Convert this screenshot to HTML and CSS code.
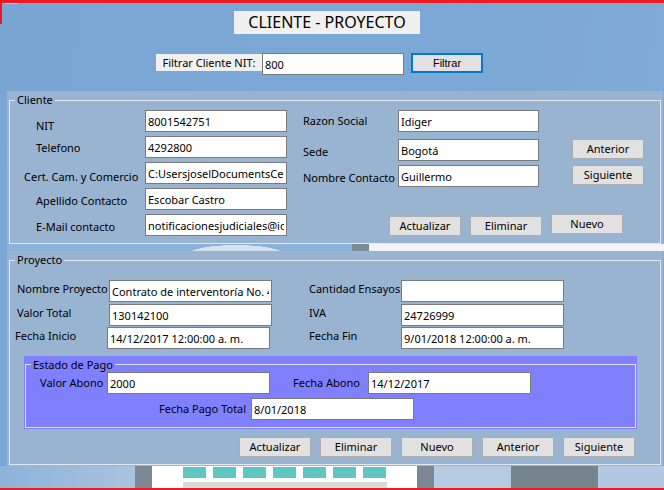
FILE: index.html
```html
<!DOCTYPE html>
<html lang="es">
<head>
<meta charset="utf-8">
<title>Cliente - Proyecto</title>
<link rel="stylesheet" href="styles.css">
</head>
<body>
<div class="screen">
  <header class="head">
    <h1 class="title">CLIENTE - PROYECTO</h1>
    <div class="filter">
      <label class="filter-label">Filtrar Cliente NIT:</label>
      <input class="tb filter-input" type="text" value="800" readonly>
      <button class="btn btn-primary" type="button">Filtrar</button>
    </div>
  </header>

  <section class="panel panel-cliente">
    <fieldset class="group">
      <legend class="legend">Cliente</legend>
      <div class="cli-body">
        <div class="cli-left">
          <label class="lbl lbl-nit">NIT</label>
          <input class="tb" type="text" value="8001542751" readonly>
          <label class="lbl lbl-tel">Telefono</label>
          <input class="tb" type="text" value="4292800" readonly>
          <label class="lbl lbl-cert">Cert. Cam. y Comercio</label>
          <input class="tb" type="text" value="C:UsersjoselDocumentsCertificados" readonly>
          <label class="lbl lbl-ape">Apellido Contacto</label>
          <input class="tb" type="text" value="Escobar Castro" readonly>
          <label class="lbl lbl-mail">E-Mail contacto</label>
          <input class="tb" type="text" value="notificacionesjudiciales@idiger.gov.co" readonly>
        </div>
        <div class="cli-right">
          <div class="rrow">
            <label class="lbl lbl-razon">Razon Social</label>
            <input class="tb tb-r" type="text" value="Idiger" readonly>
          </div>
          <div class="rrow rrow-2">
            <label class="lbl lbl-sede">Sede</label>
            <input class="tb tb-r" type="text" value="Bogotá" readonly>
            <button class="btn btn-nav" type="button">Anterior</button>
          </div>
          <div class="rrow rrow-3">
            <label class="lbl lbl-sede">Nombre Contacto</label>
            <input class="tb tb-r" type="text" value="Guillermo" readonly>
            <button class="btn btn-nav" type="button">Siguiente</button>
          </div>
          <div class="actions actions-cli">
            <button class="btn" type="button">Actualizar</button>
            <button class="btn" type="button">Eliminar</button>
            <button class="btn btn-up" type="button">Nuevo</button>
          </div>
        </div>
      </div>
    </fieldset>
  </section>

  <div class="scenery scenery-mid"></div>

  <section class="panel panel-proyecto">
    <fieldset class="group">
      <legend class="legend">Proyecto</legend>
      <div class="pro-body">
        <div class="prow">
          <div class="pair">
            <label class="lbl plbl">Nombre Proyecto</label>
            <input class="tb tb-p" type="text" value="Contrato de interventoría No. 417 de 2017" readonly>
          </div>
          <div class="pair pair-r">
            <label class="lbl plbl plbl-r">Cantidad Ensayos</label>
            <input class="tb tb-p" type="text" value="" readonly>
          </div>
        </div>
        <div class="prow prow-2">
          <div class="pair">
            <label class="lbl plbl">Valor Total</label>
            <input class="tb tb-p" type="text" value="130142100" readonly>
          </div>
          <div class="pair pair-r">
            <label class="lbl plbl plbl-r">IVA</label>
            <input class="tb tb-p" type="text" value="24726999" readonly>
          </div>
        </div>
        <div class="prow prow-3">
          <div class="pair pair-shift">
            <label class="lbl plbl">Fecha Inicio</label>
            <input class="tb tb-p" type="text" value="14/12/2017 12:00:00 a. m." readonly>
          </div>
          <div class="pair pair-r">
            <label class="lbl plbl plbl-r">Fecha Fin</label>
            <input class="tb tb-p" type="text" value="9/01/2018 12:00:00 a. m." readonly>
          </div>
        </div>

        <div class="pago">
          <fieldset class="group group-pago">
            <legend class="legend">Estado de Pago</legend>
            <div class="pago-row">
              <label class="lbl lbl-abono">Valor Abono</label>
              <input class="tb tb-p" type="text" value="2000" readonly>
              <label class="lbl lbl-fabono">Fecha Abono</label>
              <input class="tb tb-p" type="text" value="14/12/2017" readonly>
            </div>
            <div class="pago-row pago-row-2">
              <label class="lbl lbl-ftotal">Fecha Pago Total</label>
              <input class="tb tb-p" type="text" value="8/01/2018" readonly>
            </div>
          </fieldset>
        </div>

        <div class="actions actions-pro">
          <button class="btn" type="button">Actualizar</button>
          <button class="btn" type="button">Eliminar</button>
          <button class="btn" type="button">Nuevo</button>
          <button class="btn" type="button">Anterior</button>
          <button class="btn" type="button">Siguiente</button>
        </div>
      </div>
    </fieldset>
  </section>

  <div class="scenery scenery-bottom"></div>
</div>
</body>
</html>
```

FILE: styles.css
```css
* { box-sizing: border-box; }

html, body {
  margin: 0;
  padding: 0;
}

body {
  width: 664px;
  height: 490px;
  overflow: hidden;
  background: #7ba7d3;
  font-family: "Comic Sans MS", "Noto Sans", sans-serif;
  font-size: 11px;
  color: #000;
}

.screen {
  width: 664px;
  height: 490px;
  border-top: 3px solid #ed1c24;
  background:
    linear-gradient(#ed1c24, #ed1c24) 0 0 / 2px 21px no-repeat,
    linear-gradient(#c9ccd2, #c9ccd2) 5px 0 / 13px 1px no-repeat,
    linear-gradient(100deg, #79a6d2 0%, #7ba8d4 60%, #80abd6 100%);
  display: flex;
  flex-direction: column;
}

.screen > * { flex: none; }

/* header */
.head {
  display: flex;
  flex-direction: column;
}

.title {
  margin: 8px 0 0 234px;
  width: 186px;
  height: 23px;
  background: #f0f0f0;
  font-size: 16px;
  font-weight: normal;
  line-height: 23px;
  text-align: center;
}

.filter {
  margin: 19px 0 0 156px;
  display: flex;
  align-items: flex-start;
  height: 22px;
}

.filter-label {
  margin-top: 1px;
  width: 106px;
  height: 17px;
  background: #f0f0f0;
  line-height: 17px;
  text-align: center;
  white-space: nowrap;
}

.filter-input {
  margin-left: 15px;
  width: 143px;
}

/* common controls */
.tb {
  display: block;
  width: 142px;
  height: 22px;
  margin: 0;
  padding: 0 2px;
  border: 1px solid #7a7a7a;
  border-radius: 0;
  background: #fff;
  font: inherit;
  color: #000;
  outline: none;
}

.btn {
  display: block;
  width: 72px;
  height: 20px;
  margin: 0;
  padding: 0;
  border: 1px solid #adadad;
  border-radius: 0;
  background: #e1e1e1;
  font: inherit;
  line-height: 18px;
  color: #000;
  text-align: center;
}

.btn-primary {
  margin-left: 7px;
  border: 2px solid #0078d7;
  font-family: "Liberation Sans", Arial, sans-serif;
  font-size: 11px;
  line-height: 16px;
}

.lbl {
  display: block;
  white-space: nowrap;
  line-height: 15px;
}

/* panels */
.panel {
  margin-left: 7px;
  width: 656px;
  background: #99b4d1;
  padding: 1px 2px 0 2px;
  display: flex;
}

.panel-cliente { height: 153px; margin-top: 16px; }
.panel-proyecto { height: 215px; padding-bottom: 1px; }

.group {
  flex: 1;
  margin: 0;
  padding: 0;
  min-width: 0;
  border: 1px solid #e2e8f0;
}

.legend {
  margin-left: 5px;
  padding: 0 2px;
  line-height: 16px;
}

/* cliente */
.cli-body {
  display: flex;
  margin-top: 2px;
}

.cli-left {
  display: grid;
  grid-template-columns: 135px 142px;
  grid-auto-rows: 22px;
  row-gap: 4px;
}

.lbl-nit  { padding: 8px 0 0 26px; }
.lbl-tel  { padding: 4px 0 0 26px; }
.lbl-cert { padding: 7px 0 0 14px; }
.lbl-ape  { padding: 5px 0 0 26px; }
.lbl-mail { padding: 5px 0 0 26px; }

.cli-right {
  margin-left: 16px;
  display: flex;
  flex-direction: column;
}

.rrow {
  display: flex;
  align-items: flex-start;
  height: 22px;
}

.rrow-2 { margin-top: 7px; }
.rrow-3 { margin-top: 4px; }

.rrow .lbl { width: 95px; }
.lbl-razon { padding-top: 3px; }
.lbl-sede  { padding-top: 5px; }

.tb-r { width: 141px; }

.btn-nav { margin-left: 33px; }

.actions {
  display: flex;
  align-items: flex-start;
  gap: 9px;
}

.actions-cli {
  margin: 29px 0 0 86px;
}

.btn-up { margin-top: -2px; }

/* proyecto */
.pro-body {
  display: flex;
  flex-direction: column;
  margin-top: 12px;
}

.prow {
  display: flex;
  height: 22px;
}

.prow-2 { margin-top: 2px; }
.prow-3 { margin-top: 1px; }

.pair {
  display: flex;
  align-items: flex-start;
}

.pair-r { margin-left: 37px; }

.pair-shift { margin: 0 2px 0 -2px; }

.plbl {
  width: 99px;
  padding: 1px 0 0 7px;
}

.plbl-r {
  width: 92px;
  padding-left: 0;
}

.tb-p { width: 163px; }

.pago {
  margin: 7px 0 0 14px;
  width: 613px;
  height: 73px;
  background: #8080ff;
  padding: 1px;
  display: flex;
}

.group-pago {
  border-color: #dfe3ff;
}

.group-pago .legend {
  line-height: 15px;
}

.pago-row {
  display: flex;
  align-items: flex-start;
  height: 22px;
}

.pago-row-2 { margin-top: 4px; }

.lbl-abono {
  width: 81px;
  padding: 3px 0 0 14px;
}

.lbl-fabono {
  width: 75px;
  margin-left: 23px;
  padding-top: 3px;
}

.lbl-ftotal {
  width: 92px;
  margin-left: 133px;
  padding-top: 3px;
}

.actions-pro {
  margin: 8px 0 0 229px;
}

/* scenery (background picture showing between / below panels) */
.scenery {
  width: 664px;
}

.scenery-mid {
  height: 7px;
  background:
    radial-gradient(ellipse 82px 18px at 236px 12px, #d6e2ef 60%, rgba(214,226,239,0) 62%) no-repeat,
    linear-gradient(to right,
      #7ba7d3 0 7px,
      #8db2d9 7px 352px,
      #7d8b97 352px 369px,
      #f5f3f5 369px 664px);
}

.scenery-bottom {
  height: 24px;
  border-bottom: 2px solid #ed1c24;
  background:
    repeating-linear-gradient(90deg, #5fc7bf 0 23px, transparent 23px 30px) 183px 1px / 203px 11px no-repeat,
    linear-gradient(#d9d9d9, #d9d9d9) 183px 16px / 204px 6px no-repeat,
    linear-gradient(to right,
      #8db3da 0,
      #a9c3de 135px,
      #7b8893 135px 152px,
      #ffffff 152px 417px,
      #7b8893 417px 434px,
      #b5cbe2 434px 511px,
      #76848e 511px 598px,
      #b3c9e1 598px 664px);
}
```
